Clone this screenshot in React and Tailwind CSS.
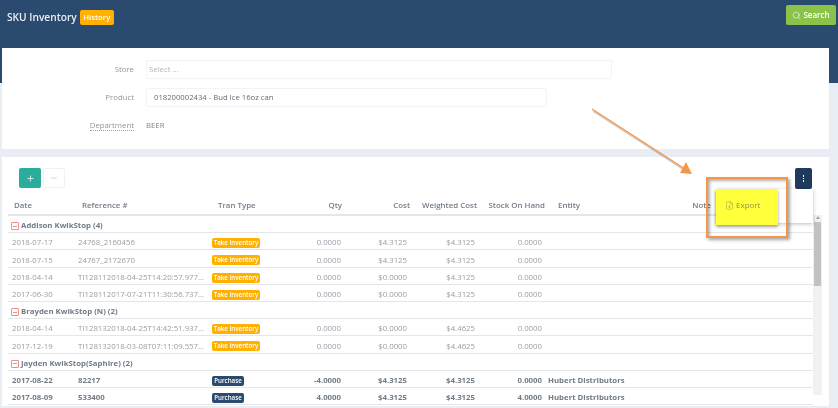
import React from "react";
import { Search, Plus, Minus, FileDown } from "lucide-react";

const cols = "grid grid-cols-[66px_134px_82px_55px_66px_68px_67px_1fr] items-center";

function Badge({ kind }) {
  const take = kind === "take";
  return (
    <span className={`inline-flex h-[10px] items-center justify-center whitespace-nowrap rounded-[2px] text-[6.2px] font-semibold leading-none text-white ${take ? "w-[48px] bg-[#ffb000]" : "w-[32px] bg-[#2b4a6f]"}`}>
      {take ? "Take Inventory" : "Purchase"}
    </span>
  );
}

function Group({ name }) {
  return (
    <div className="flex h-[17.2px] items-center gap-[2px] border-b border-[#e4e6e9] pl-[3px] pt-[4px] text-[7.8px] font-bold text-[#717b87]">
      <span className="flex h-[8px] w-[8px] items-center justify-center rounded-[1px] border border-[#ee8f88]">
        <span className="h-px w-[4px] bg-[#ee8f88]" />
      </span>
      {name}
    </div>
  );
}

function Row({ r, bold }) {
  return (
    <div className={`${cols} h-[17.2px] border-b border-[#e4e6e9] pt-[4px] text-[7.8px] ${bold ? "font-bold text-[#737c86]" : "text-[#989ea5]"}`}>
      <span className="pl-[4px]">{r[0]}</span>
      <span className="whitespace-nowrap pl-[4px]">{r[1]}</span>
      <span className="flex pl-[4px]"><Badge kind={bold ? "purchase" : "take"} /></span>
      <span className="pr-[4px] text-right">{r[2]}</span>
      <span className="pr-[4px] text-right">{r[3]}</span>
      <span className="pr-[4px] text-right">{r[4]}</span>
      <span className="pr-[4px] text-right">{r[5]}</span>
      <span className="pl-[2px]">{r[6]}</span>
    </div>
  );
}

function Field({ label, dotted, children, className }) {
  return (
    <div className={`flex items-center gap-[12px] ${className}`}>
      <span className="w-[132px] shrink-0 text-right text-[7.8px] text-[#8f969e]">
        <span className={dotted ? "border-b border-dotted border-[#99a0a8]" : ""}>{label}</span>
      </span>
      {children}
    </div>
  );
}

export default function App() {
  return (
    <div className="h-[408px] w-[838px] overflow-hidden bg-[#e9edf4] blur-[0.5px] [font-family:'Open_Sans',sans-serif]">
      <div className="relative h-[408px] w-[838px]">
        <header className="flex h-[83px] items-start justify-between bg-[#2b4a6f] pl-[7px] pr-[2px] pt-[5px]">
          <div className="flex items-center gap-[3px] pt-[5px]">
            <span className="text-[10.2px] font-semibold text-[#e9eef4]">SKU Inventory</span>
            <span className="flex h-[15px] w-[34px] items-center justify-center rounded-[2px] bg-[#ffb000] text-[7.8px] font-semibold text-white">History</span>
          </div>
          <button className="flex h-[20px] w-[50px] items-center justify-center gap-[2px] rounded-[2px] bg-[#8bc34a] text-[8px] font-semibold text-white">
            <Search size={9} strokeWidth={1.5} /> Search
          </button>
        </header>

        <section className="mx-[2px] -mt-[35px] flex h-[101px] w-[827px] flex-col bg-white pt-[12px]">
          <Field label="Store">
            <div className="flex h-[19px] w-[466px] items-center rounded-[2px] border border-[#f2f3f5] pl-[2px] text-[7.8px] text-[#b0b6bc]">Select ...</div>
          </Field>
          <Field label="Product" className="mt-[9px]">
            <div className="flex h-[19px] w-[401px] items-center rounded-[2px] border border-[#f2f3f5] pl-[7px] text-[7.7px] text-[#656d76]">018200002434 - Bud Ice 16oz can</div>
          </Field>
          <Field label="Department" dotted className="mt-[13px]">
            <div className="text-[7.8px] text-[#7f868e]">BEER</div>
          </Field>
        </section>

        <section className="mx-[2px] mt-[8px] h-[249px] w-[827px] bg-white pl-[6px] pr-[7px]">
          <div className="flex items-start justify-between pl-[11px] pr-[10px] pt-[11px]">
            <div className="flex gap-[2px]">
              <button className="flex h-[20px] w-[22px] items-center justify-center rounded-[2px] bg-[#2bad9b] text-white"><Plus size={9} strokeWidth={2} /></button>
              <button className="flex h-[20px] w-[22px] items-center justify-center rounded-[2px] border border-[#f0f1f3] text-[#9aa0a6]"><Minus size={8} strokeWidth={1.5} /></button>
            </div>
            <button className="flex h-[21px] w-[17px] items-center justify-center rounded-[2px] bg-[#1f3a5c]">
              <span className="flex flex-col gap-[1px]">
                <span className="h-[1.5px] w-[1.5px] bg-white" />
                <span className="h-[1.5px] w-[1.5px] bg-white" />
                <span className="h-[1.5px] w-[1.5px] bg-white" />
              </span>
            </button>
          </div>

          <div className="flex">
            <div className="w-[806px]">
              <div className={`${cols} mt-[7px] h-[20px] border-b-2 border-[#e4e6e9] pt-[1px] text-[7.9px] font-semibold text-[#747d88]`}>
                <span className="pl-[6px]">Date</span>
                <span className="pl-[8px]">Reference #</span>
                <span className="pl-[10px]">Tran Type</span>
                <span className="pr-[3px] text-right">Qty</span>
                <span className="pr-[1px] text-right">Cost</span>
                <span className="pr-[2px] text-right">Weighted Cost</span>
                <span className="pr-[1px] text-right">Stock On Hand</span>
                <span className="flex justify-between pl-[12px] pr-[102px]"><span>Entity</span><span>Note</span></span>
              </div>
              <Group name="Addison KwikStop (4)" />
              <Row r={["2018-07-17", "24768_2160456", "0.0000", "$4.3125", "$4.3125", "0.0000"]} />
              <Row r={["2018-07-15", "24767_2172670", "0.0000", "$4.3125", "$4.3125", "0.0000"]} />
              <Row r={["2018-04-14", "TI128112018-04-25T14:20:57.977...", "0.0000", "$0.0000", "$4.3125", "0.0000"]} />
              <Row r={["2017-06-30", "TI128112017-07-21T11:30:56.737...", "0.0000", "$0.0000", "$4.3125", "0.0000"]} />
              <Group name="Brayden KwikStop (N) (2)" />
              <Row r={["2018-04-14", "TI128132018-04-25T14:42:51.937...", "0.0000", "$0.0000", "$4.4625", "0.0000"]} />
              <Row r={["2017-12-19", "TI128132018-03-08T07:11:09.557...", "0.0000", "$0.0000", "$4.4625", "0.0000"]} />
              <Group name="Jayden KwikStop(Saphire) (2)" />
              <Row bold r={["2017-08-22", "82217", "-4.0000", "$4.3125", "$4.3125", "0.0000", "Hubert Distributors"]} />
              <Row bold r={["2017-08-09", "533400", "4.0000", "$4.3125", "$4.3125", "4.0000", "Hubert Distributors"]} />
            </div>
            <div className="mt-[26px] flex h-[180px] w-[9px] flex-col items-center bg-[#f1f1f1] pt-[1px]">
              <span className="h-0 w-0 border-x-[2px] border-b-[3px] border-x-transparent border-b-[#a3a3a3]" />
              <span className="mt-[3px] h-[64px] w-[7px] bg-[#c1c1c1]" />
            </div>
          </div>
        </section>

        {/* Dropdown opened over the table, with the annotation drawn on top */}
        <div className="absolute left-[716px] top-[189px] h-[34px] w-[97px] bg-white shadow-[0_1px_4px_rgba(0,0,0,0.25)]">
          <div className="flex h-[36px] w-[62px] items-center gap-[2px] bg-[#ffff3c] pb-[4px] pl-[9px] text-[8px] text-[#8f9345] shadow-[0_2px_3px_rgba(0,0,0,0.35)]">
            <FileDown size={9} strokeWidth={1.2} /> Export
          </div>
        </div>
        <div className="absolute left-[706px] top-[177px] h-[61px] w-[82px] border-2 border-[#f79646] shadow-[2px_2px_3px_rgba(0,0,0,0.35),inset_2px_2px_3px_rgba(0,0,0,0.3)]" />
        <svg className="absolute left-[585px] top-[100px]" width="115" height="80" viewBox="0 0 115 80" fill="none">
          <path d="M7 9 L100 69" stroke="#9a9a9a" strokeWidth="1.5" opacity="0.5" transform="translate(1 2)" />
          <path d="M7 9 L100 69" stroke="#f79646" strokeWidth="1.4" />
          <path d="M107 74 L95 73 L101 62 Z" fill="#f79646" />
        </svg>
      </div>
    </div>
  );
}
